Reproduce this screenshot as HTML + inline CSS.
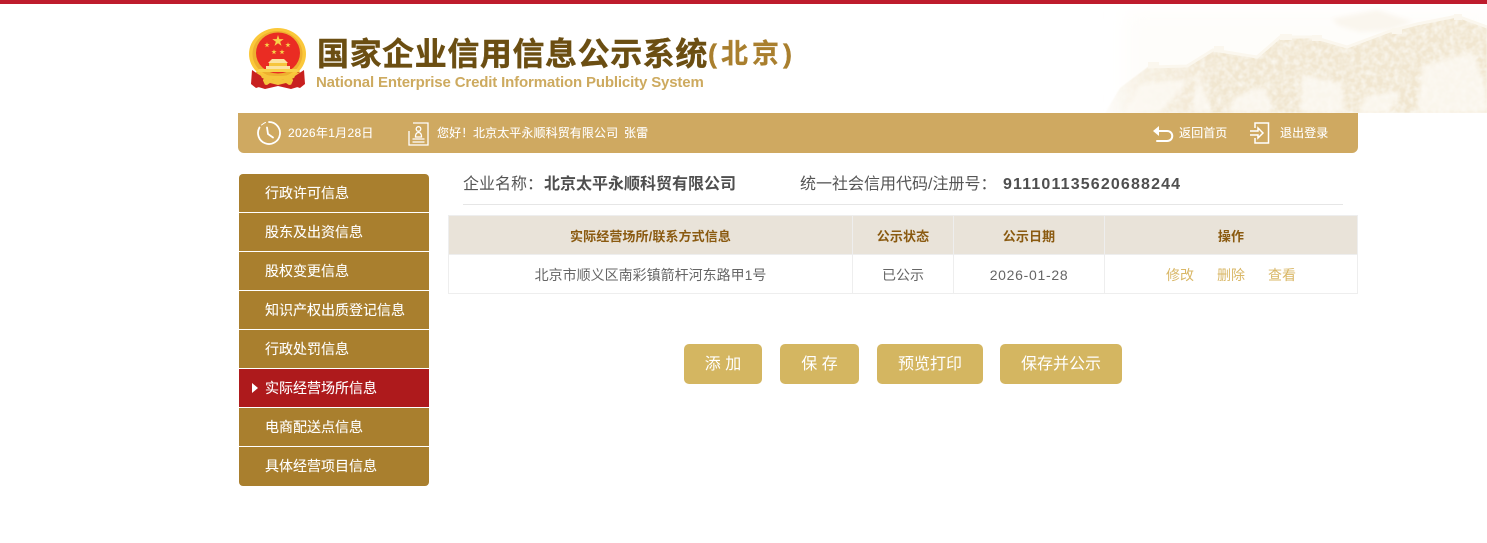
<!DOCTYPE html>
<html lang="zh-CN"><head><meta charset="utf-8"><title>国家企业信用信息公示系统(北京)</title>
<style>
*{box-sizing:border-box;margin:0;padding:0}
html,body{width:1487px;height:543px;overflow:hidden;background:#fff}
body{position:relative;font-family:"Liberation Sans","Noto Sans CJK SC",sans-serif;color:#555}
.a{position:absolute;white-space:nowrap}
.top{left:0;top:0;width:1487px;height:4px;background:#be1c2d}
.t1{left:317px;top:33px;font-size:32px;line-height:42px;font-weight:700;color:#6b4e12;letter-spacing:.58px;-webkit-text-stroke:.4px #6b4e12}
.t2{left:708px;top:33px;font-size:27px;line-height:42px;font-weight:700;color:#a97f2e;letter-spacing:4px;-webkit-text-stroke:.3px #a97f2e}
.t3{left:316px;top:73px;font-size:15px;line-height:20px;font-weight:700;color:#cdaa5f;letter-spacing:-.15px}
.bar{left:238px;top:113px;width:1120px;height:40px;background:#cfa961;border-radius:0 0 6px 6px}
.w{color:#fff;font-size:12px;line-height:40px;top:113px;letter-spacing:.1px;-webkit-text-stroke:.1px #fff}
.nav{left:239px;top:174px;width:190px;border-radius:4px;overflow:hidden}
.nav div{height:39px;border-bottom:1px solid #fff;background:#a97f2e;color:#fff;font-size:14px;line-height:38px;padding-left:26px;position:relative;-webkit-text-stroke:.1px #fff}
.nav div:last-child{height:39px;border-bottom:0}
.nav .on{background:#ae1a1c}
.nav .on:before{content:"";position:absolute;left:13px;top:14px;border-left:6px solid #fff;border-top:5px solid transparent;border-bottom:5px solid transparent}
.l{font-size:16px;line-height:22px;top:174px;color:#555}
.b{font-weight:700;color:#4f4f4f}
.hr{left:463px;top:204px;width:880px;height:1px;background:#e6e6e6}
table{position:absolute;left:448px;top:215px;width:909px;height:79px;border-collapse:collapse;table-layout:fixed}
th,td{border:1px solid #eeeeee;text-align:center;font-size:14px;padding:0}
th{background:#e9e3d9;color:#8a5a10;font-size:13px;font-weight:700;height:39px;letter-spacing:.1px}
td{color:#666;height:39px;padding-top:2px}
td span{color:#d9b766;margin:0 11.5px}
.btn{top:344px;height:40px;background:#d4b661;color:#fff;border-radius:5px;text-align:center;font-size:16px;line-height:41px}
</style></head><body>
<div class="a top"></div>

<svg class="a" style="left:1100px;top:4px" width="387" height="109" viewBox="0 0 387 109">
<defs>
<linearGradient id="fg" x1="0" x2="1" y1="0" y2="0"><stop offset="0" stop-color="#f1e6d0" stop-opacity=".1"/><stop offset=".1" stop-color="#f1e6d0" stop-opacity=".6"/><stop offset=".3" stop-color="#f1e6d0"/><stop offset="1" stop-color="#f1e6d0"/></linearGradient>
<filter id="tx" x="0" y="0" width="100%" height="100%"><feGaussianBlur in="SourceGraphic" stdDeviation=".4" result="s"/><feTurbulence type="fractalNoise" baseFrequency=".18" numOctaves="2" seed="4"/><feColorMatrix values="0 0 0 0 1 0 0 0 0 1 0 0 0 0 .97 1.200 0 0 0 -.4"/><feComposite in2="s" operator="in" result="n"/><feMerge><feMergeNode in="s"/><feMergeNode in="n"/></feMerge></filter>
<filter id="bl" x="-20%" y="-20%" width="140%" height="140%"><feGaussianBlur stdDeviation="2.500"/></filter>
<filter id="bh" x="-20%" y="-20%" width="140%" height="140%"><feGaussianBlur stdDeviation="10"/></filter>
</defs>
<rect x="25" y="8" width="362" height="90" fill="#fefdfa" filter="url(#bh)"/>
<path d="M232 15l25-5 20-4 18 6 18 6-22 8-30 2-22-6z" fill="#faf6ee" filter="url(#bl)"/>
<path d="M5 109 20 84 48 63 87 62 113 46 157 53 180 33 213 33 247 43 290 27 317 20 357 12 387 23V109Z" fill="url(#fg)" filter="url(#tx)"/>
<path d="M48 63 87 62 113 46 157 53 180 33 213 33 247 43 290 27 317 20 357 12 387 23" fill="none" stroke="#fbf7ee" stroke-width="3"/>
<g fill="#fdfaf4" opacity=".8" filter="url(#bl)">
<path d="M98 68l14 40H92z"/>
<path d="M135 92l30-10 8 27h-46z"/>
<path d="M202 70l40 10 3 29h-45z"/>
<path d="M322 62l50-15 15 40v22h-70z"/>
<path d="M265 92l35-5-10 22h-32z"/>
<path d="M40 80l50-5-30 34H25z"/>
</g>
<g fill="#fbf7ee">
<rect x="48" y="58" width="11" height="6"/><rect x="114" y="42" width="10" height="6"/><rect x="180" y="30" width="12" height="6"/><rect x="212" y="31" width="10" height="6"/><rect x="292" y="24" width="10" height="6"/><rect x="354" y="10" width="8" height="6"/>
</g>
</svg>

<svg class="a" style="left:247px;top:26px" width="62" height="66" viewBox="0 0 62 66">
<path d="M10 42 8 60 18 63 31 60 44 63 54 60 52 42Z" fill="#c8201f"/>
<ellipse cx="30.500" cy="28" rx="28.500" ry="26" fill="#fbc83a"/>
<ellipse cx="30.500" cy="28" rx="25" ry="23" fill="#eeb02f"/>
<ellipse cx="31" cy="27" rx="22" ry="20.500" fill="#ea2c23"/>
<g fill="#f8d24a">
<path transform="translate(31 15) scale(6)" d="M0-1 .225-.31.95-.31.36.12.59.81 0 .38-.59.81-.36.12-.95-.31-.225-.31Z"/>
<path transform="translate(20 19) scale(2.800)" d="M0-1 .225-.31.95-.31.36.12.59.81 0 .38-.59.81-.36.12-.95-.31-.225-.31Z"/>
<path transform="translate(41 19) scale(2.800)" d="M0-1 .225-.31.95-.31.36.12.59.81 0 .38-.59.81-.36.12-.95-.31-.225-.31Z"/>
<path transform="translate(27 26) scale(2.800)" d="M0-1 .225-.31.95-.31.36.12.59.81 0 .38-.59.81-.36.12-.95-.31-.225-.31Z"/>
<path transform="translate(35 26) scale(2.800)" d="M0-1 .225-.31.95-.31.36.12.59.81 0 .38-.59.81-.36.12-.95-.31-.225-.31Z"/>
</g>
<path d="M25 33h12l4 4H21z" fill="#fce3a0"/>
<path d="M22 37h18v3H22z" fill="#f6c53c"/>
<path d="M19 40h24v3H19z" fill="#fce3a0"/>
<path d="M12 43h38l3 3H9z" fill="#f8d24a"/>
<path d="M9 46c7 3 14 4 22 4s15-1 22-4l1 3c-7 4-15 5-23 5S15 53 8 49z" fill="#f6c53c"/>
<path d="M17 52c4 1 9 2 14 2s10-1 14-2l3 6-6 1-3-2-8 2-8-2-3 2-6-1z" fill="#f6c53c"/>
<path d="M5 44 4 58 9 62 18 59 14 50Z" fill="#c8201f"/><path d="M57 44 58 58 53 62 44 59 48 50Z" fill="#c8201f"/>
</svg>

<div class="a t1">国家企业信用信息公示系统</div>
<div class="a t2">(北京)</div>
<div class="a t3">National Enterprise Credit Information Publicity System</div>

<div class="a bar"></div>
<svg class="a" style="left:256px;top:120px" width="26" height="26" viewBox="0 0 26 26" fill="none" stroke="#fff" stroke-width="1.800" stroke-linecap="round">
<path d="M13 2a11 11 0 1 1-9.500 5.500"/><path d="M5.500 5C7 4 8 3 9.500 2.500" stroke-width="1"/><path d="M11 7.500 12 14l5 3.500"/>
</svg>
<div class="a w" style="left:288px;letter-spacing:.3px">2026年1月28日</div>
<svg class="a" style="left:408px;top:122px" width="21" height="24" viewBox="0 0 21 24" fill="none" stroke="#fff" stroke-width="1.300">
<path d="M5 1h15v22H1V9"/><circle cx="10.500" cy="7" r="2.300"/><path d="M7.500 15c0-3 1-4.500 3-4.500s3 1.500 3 4.500zM4.500 17h12M4.500 20h12"/>
</svg>
<div class="a w" style="left:437px">您好！</div>
<div class="a w" style="left:473px">北京太平永顺科贸有限公司</div>
<div class="a w" style="left:624px">张雷</div>
<svg class="a" style="left:1152px;top:124px" width="22" height="20" viewBox="0 0 22 20" fill="none" stroke="#fff" stroke-width="2">
<path d="M5 7h10c7 0 7 10 0 10H5" stroke-linecap="round"/><path d="M1 7l6-5v10z" fill="#fff" stroke="none"/>
</svg>
<div class="a w" style="left:1179px">返回首页</div>
<svg class="a" style="left:1249px;top:121px" width="22" height="24" viewBox="0 0 22 24" fill="none" stroke="#fff" stroke-width="1.500">
<path d="M6 7V2h13.500v20H6v-5"/><path d="M1 10h8V7l5 5-5 5v-3H1"/>
</svg>
<div class="a w" style="left:1280px">退出登录</div>

<div class="a nav">
<div>行政许可信息</div><div>股东及出资信息</div><div>股权变更信息</div><div>知识产权出质登记信息</div><div>行政处罚信息</div><div class="on">实际经营场所信息</div><div>电商配送点信息</div><div>具体经营项目信息</div>
</div>

<div class="a l" style="left:463px">企业名称：</div>
<div class="a l b" style="left:544px">北京太平永顺科贸有限公司</div>
<div class="a l" style="left:800px">统一社会信用代码/注册号：</div>
<div class="a l b" style="left:1003px;letter-spacing:1.15px">911101135620688244</div>
<div class="a hr"></div>

<table>
<colgroup><col style="width:404px"><col style="width:101px"><col style="width:151px"><col style="width:253px"></colgroup>
<tr><th>实际经营场所/联系方式信息</th><th>公示状态</th><th>公示日期</th><th>操作</th></tr>
<tr><td>北京市顺义区南彩镇箭杆河东路甲1号</td><td>已公示</td><td style="letter-spacing:.7px">2026-01-28</td><td><span>修改</span><span>删除</span><span>查看</span></td></tr>
</table>

<div class="a btn" style="left:684px;width:78px">添 加</div>
<div class="a btn" style="left:780px;width:79px">保 存</div>
<div class="a btn" style="left:877px;width:106px">预览打印</div>
<div class="a btn" style="left:1000px;width:122px">保存并公示</div>
</body></html>
